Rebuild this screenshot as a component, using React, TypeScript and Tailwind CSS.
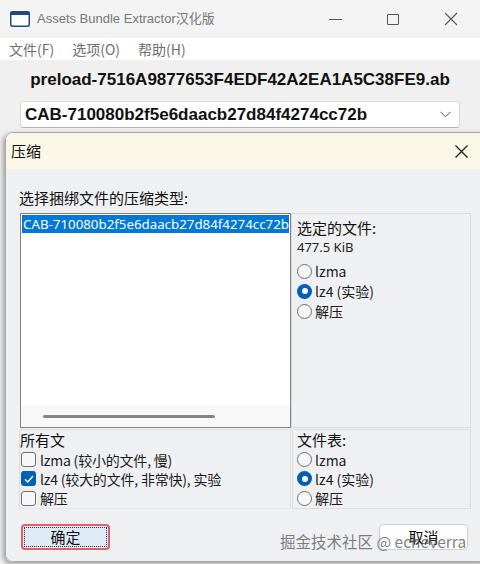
import React from "react";

const ui = { fontFamily: '"Noto Sans", "Noto Sans CJK SC", sans-serif' };
const cjk = { fontFamily: '"Noto Sans CJK SC", "Noto Sans", sans-serif' };
const bold = { fontFamily: '"Liberation Sans", Arial, sans-serif' };
const title = { fontFamily: '"Liberation Sans", "Noto Sans CJK SC", sans-serif' };

function Radio({ checked, label }: { checked?: boolean; label: string }) {
  return (
    <div className="flex items-center h-[20px] gap-[3px]">
      {checked ? (
        <span className="w-[15px] h-[15px] rounded-full bg-[#005fb8] flex items-center justify-center">
          <span className="w-[6px] h-[6px] rounded-full bg-white" />
        </span>
      ) : (
        <span className="w-[15px] h-[15px] rounded-full border border-[#6e6e6e] bg-[#f7f7f7]" />
      )}
      <span className="text-[14px] text-[#1b1b1b] leading-none" style={cjk}>
        {label}
      </span>
    </div>
  );
}

function Check({ checked, label }: { checked?: boolean; label: string }) {
  return (
    <div className="flex items-center h-[20px] gap-[4px] ml-[1px]">
      {checked ? (
        <span className="w-[15px] h-[15px] rounded-[3px] bg-[#005fb8] flex items-center justify-center">
          <svg width="10" height="8" viewBox="0 0 10 8">
            <path d="M1 4.2 L3.8 7 L9 1" stroke="white" strokeWidth="1.3" fill="none" />
          </svg>
        </span>
      ) : (
        <span className="w-[15px] h-[15px] rounded-[3px] border border-[#6e6e6e] bg-[#f7f7f7]" />
      )}
      <span className="text-[14px] text-[#1b1b1b] leading-none tracking-[-0.2px]" style={cjk}>
        {label}
      </span>
    </div>
  );
}

export default function App() {
  return (
    <div className="relative w-[480px] h-[564px] overflow-hidden bg-[#e9e9e9] flex flex-col" style={ui}>
      {/* title bar */}
      <div className="h-[38px] shrink-0 bg-[#f3f3f3] flex items-center">
        <svg className="ml-[10px]" width="20" height="16" viewBox="0 0 20 16">
          <rect x="0.75" y="0.75" width="18.5" height="14.5" rx="1.5" fill="white" stroke="#24477d" strokeWidth="1.5" />
          <rect x="1" y="1" width="18" height="3" fill="#24477d" />
        </svg>
        <span className="ml-[7px] text-[13px] text-[#777]" style={title}>
          Assets Bundle Extractor汉化版
        </span>
        <div className="ml-auto flex h-full">
          <div className="w-[58px] flex items-center justify-center">
            <span className="w-[13px] h-px bg-[#555]" />
          </div>
          <div className="w-[58px] flex items-center justify-center">
            <span className="w-[12px] h-[11px] border border-[#555] rounded-[1px]" />
          </div>
          <div className="w-[58px] flex items-center justify-center">
            <svg width="14" height="14" viewBox="0 0 14 14">
              <path d="M1 1 L13 13 M13 1 L1 13" stroke="#555" strokeWidth="1.1" />
            </svg>
          </div>
        </div>
      </div>

      {/* menu */}
      <div className="h-[22px] shrink-0 bg-white flex items-center pl-[9px] gap-[18px] text-[14px] text-[#707070]" style={cjk}>
        <span>文件(F)</span>
        <span>选项(O)</span>
        <span>帮助(H)</span>
      </div>

      <div className="bg-[#f0f0f0] flex flex-col flex-1">
        <div className="pt-[10px] h-[30px] text-center text-[17px] font-bold text-[#111] leading-[20px]" style={bold}>
          preload-7516A9877653F4EDF42A2EA1A5C38FE9.ab
        </div>
        <div className="mt-[11px] mx-[20px] h-[27px] bg-white border border-[#d9d9d9] border-b-[#b5b5b5] rounded-[3px] flex items-center pl-[4px] pr-[8px]">
          <span className="text-[17px] font-bold text-[#111]" style={bold}>
            CAB-710080b2f5e6daacb27d84f4274cc72b
          </span>
          <svg className="ml-auto" width="11" height="7" viewBox="0 0 11 7">
            <path d="M0.5 0.8 L5.5 5.8 L10.5 0.8" stroke="#555" strokeWidth="1" fill="none" />
          </svg>
        </div>

        {/* dialog */}
        <div className="mt-[4px] ml-[5px] mb-[2px] w-[480px] flex-1 flex flex-col rounded-tl-[8px] rounded-bl-[8px] border border-[#a9a9a9] overflow-hidden shadow-[-2px_2px_5px_rgba(0,0,0,0.35)]">
          <div className="h-[36px] shrink-0 bg-[#faf7e6] flex items-center pl-[5px]">
            <span className="text-[15px] text-[#111]" style={cjk}>压缩</span>
            <div className="ml-auto w-[46px] flex items-center justify-center">
              <svg width="13" height="13" viewBox="0 0 13 13">
                <path d="M0.5 0.5 L12.5 12.5 M12.5 0.5 L0.5 12.5" stroke="#1a1a1a" strokeWidth="1.2" />
              </svg>
            </div>
          </div>

          <div className="flex-1 bg-[#eff0f2] pl-[14px] pt-[19px] flex flex-col">
            <div className="w-[451px] flex flex-col">
              <span className="-ml-px h-[20px] leading-[20px] text-[15px] text-[#111]" style={cjk}>
                选择捆绑文件的压缩类型:
              </span>

              <div className="mt-[5px] flex h-[215px]">
                <div className="w-[271px] border border-[#838383] bg-white flex flex-col">
                  <div className="mx-px mt-px h-[18px] bg-[#0078d7] text-white text-[13.3px] leading-[18px] pl-[1px] whitespace-nowrap overflow-hidden">
                    CAB-710080b2f5e6daacb27d84f4274cc72b
                  </div>
                  <div className="mt-auto h-[22px] bg-[#f8f8f8] flex items-center">
                    <span className="ml-[22px] w-[172px] h-[3px] rounded-full bg-[#868686]" />
                  </div>
                </div>
                <div className="w-[180px] border border-[#dadada] pl-[5px] pt-[4px] flex flex-col">
                  <span className="h-[20px] leading-[20px] text-[15px] text-[#111]" style={cjk}>
                    选定的文件:
                  </span>
                  <span className="h-[18px] leading-[18px] text-[13px] text-[#222]">477.5 KiB</span>
                  <div className="mt-[5px] flex flex-col">
                    <Radio label="lzma" />
                    <Radio checked label="lz4 (实验)" />
                    <Radio label="解压" />
                  </div>
                </div>
              </div>

              <div className="mt-px flex h-[80px]">
                <div className="w-[272px] -ml-px border border-[#dedede] border-b-[#e6e6e6] flex flex-col">
                  <span className="h-[20px] leading-[20px] text-[15px] text-[#111]" style={cjk}>所有文</span>
                  <Check label="lzma (较小的文件, 慢)" />
                  <Check checked label="lz4 (较大的文件, 非常快), 实验" />
                  <Check label="解压" />
                </div>
                <div className="w-[179px] ml-px border border-[#dedede] pl-[4px] flex flex-col">
                  <span className="h-[20px] leading-[20px] text-[15px] text-[#111]" style={cjk}>文件表:</span>
                  <Radio label="lzma" />
                  <Radio checked label="lz4 (实验)" />
                  <Radio label="解压" />
                </div>
              </div>

              <div className="mt-[15px] flex">
                <button className="ml-px w-[89px] h-[26px] rounded-[4px] border-2 border-[#e35d6e] bg-[#dfeaf7] p-[1px] flex">
                  <span className="flex-1 border border-dotted border-[#333] flex items-center justify-center text-[15px] text-[#111]" style={cjk}>
                    确定
                  </span>
                </button>
                <button className="ml-auto mr-[3px] w-[89px] h-[26px] rounded-[4px] border border-[#cfcfcf] bg-[#fdfdfd] text-[15px] text-[#111]" style={cjk}>
                  取消
                </button>
              </div>
            </div>
          </div>
        </div>
      </div>

      <span className="absolute left-[280px] top-[530px] text-[15.5px] text-[rgba(85,85,85,0.75)]" style={cjk}>
        掘金技术社区 @ echeverra
      </span>
    </div>
  );
}
